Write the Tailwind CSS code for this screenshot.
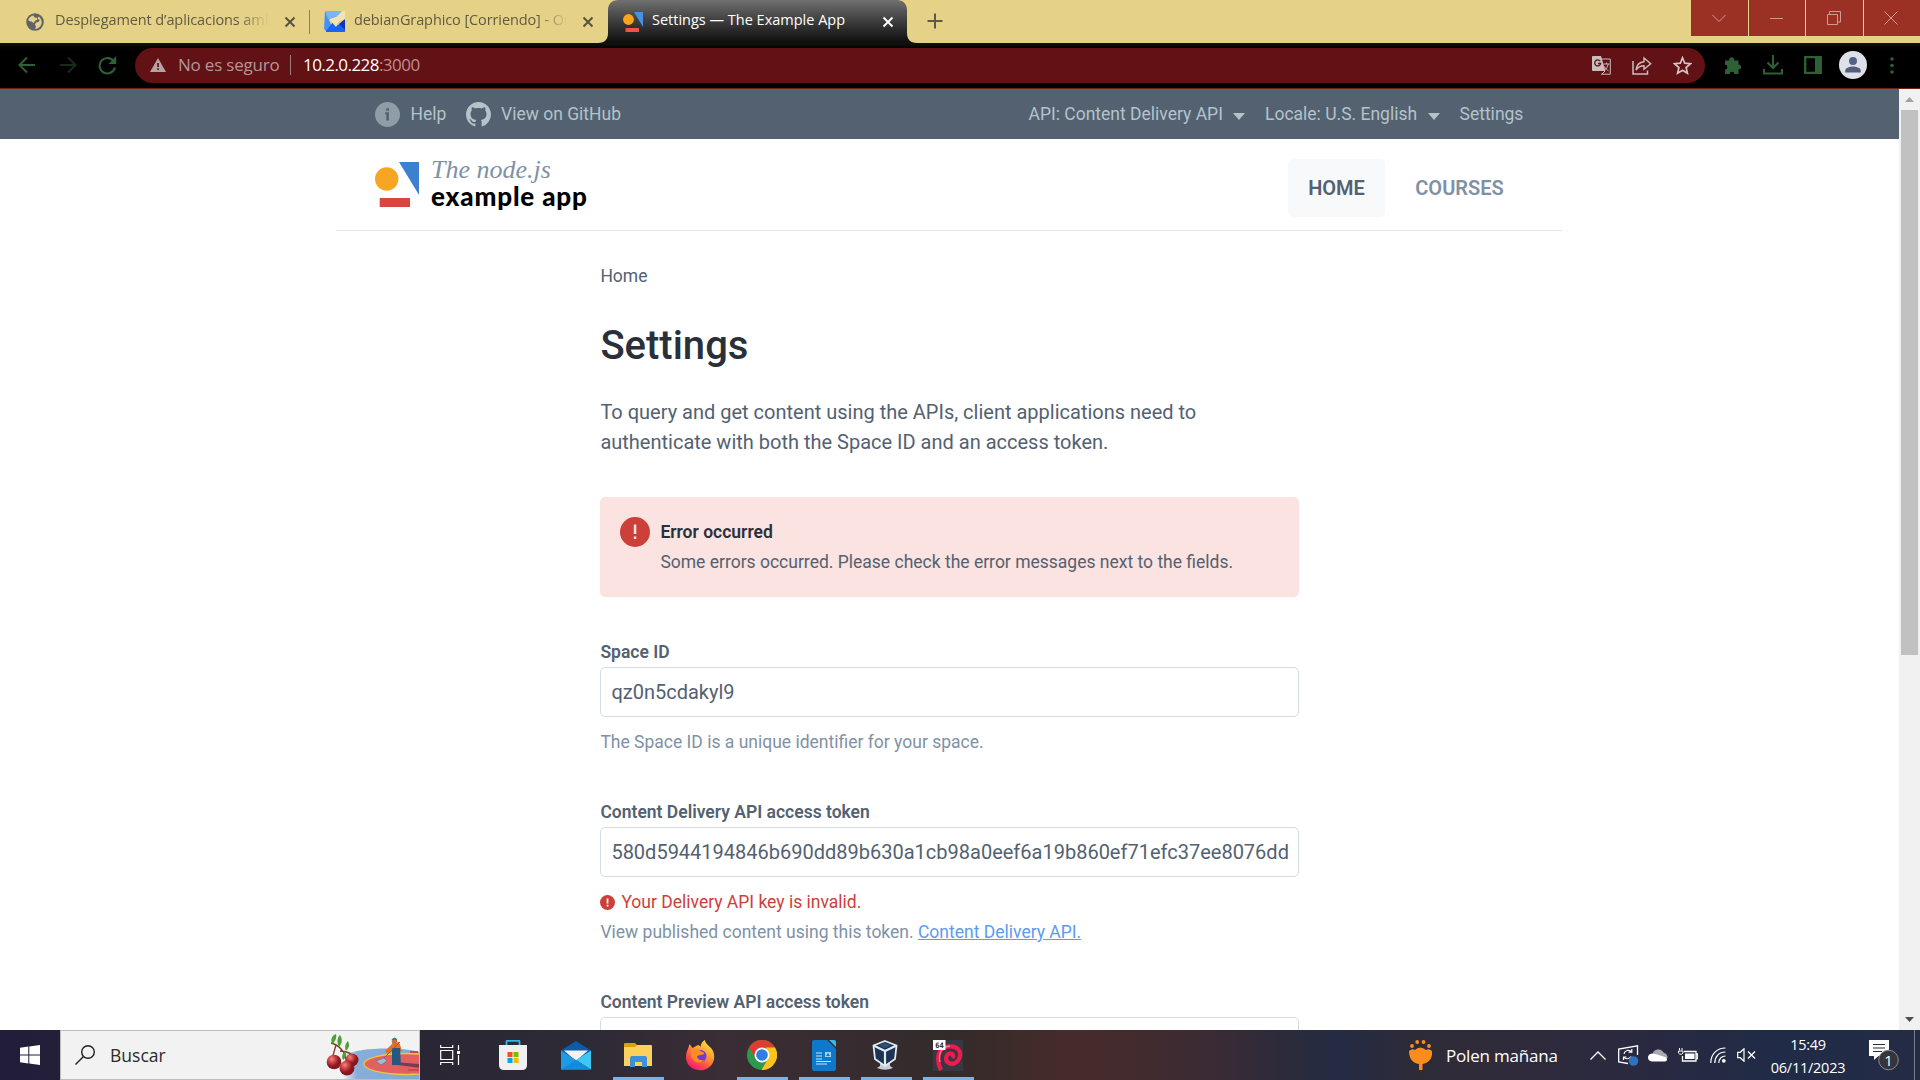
<!DOCTYPE html>
<html lang="es">
<head>
<meta charset="utf-8">
<title>Settings — The Example App</title>
<script src="https://cdn.jsdelivr.net/npm/@tailwindcss/browser@4"></script>
</head>
<body class="w-[1920px] h-[1080px] overflow-hidden flex flex-col bg-white font-['Roboto',sans-serif]">

<!-- Tab strip -->
<header class="h-[43px] shrink-0 bg-[#e6d287] flex items-start font-['Open_Sans',sans-serif] text-[14.5px] text-[#5f5a45]">
  <div class="w-[309px] h-[43px] pl-[26px] flex items-center shrink-0">
    <svg class="w-[18px] h-[18px] shrink-0" viewBox="0 0 18 18"><circle cx="9" cy="9" r="8.8" fill="#5f6368"/><path d="M7.500 2.500c-2.800.3-4.900 2.500-5.300 5.100l3 .9 2.500 1.500 1.300-2.200 2.200-1-.3-2.100-2.400-.3zM12.500 3.500l-1 2.300 2.300 1.200-1.300 2-2.500.6-1.200 2.200 1.300 1.300-1 2.900c4.100-.3 6.500-3.400 6.600-6.700-.1-2.500-1.300-4.500-3.200-5.800z" fill="#e6d287"/></svg>
    <span class="ml-[11px] w-[214px] overflow-hidden whitespace-nowrap tracking-[-0.1px] pb-[3px] [mask-image:linear-gradient(90deg,#000_86%,transparent)]">Desplegament d’aplicacions amb</span>
    <svg class="ml-[15px] w-[12px] h-[12px] shrink-0" viewBox="0 0 12 12"><path d="M1.500 1.500l9 9M10.500 1.500l-9 9" stroke="#55513f" stroke-width="1.900"/></svg>
  </div>
  <div class="w-[299px] h-[43px] flex items-center shrink-0">
    <div class="w-px h-[24px] bg-[#8d8256]"></div>
    <svg class="ml-[14px] w-[21px] h-[21px] shrink-0" viewBox="0 0 21 21"><path d="M1 0h17l-6 6-7 3 5 11H2L0 18z" fill="#4790f8"/><path d="M1 0h17l-5 5-9 3z" fill="#79b5fa"/><path d="M2 20l7-9 3 4 9-5v11H2z" fill="#1b63f5"/><path d="M15 13l6-5v11z" fill="#0a35c0"/><path d="M5 8l8-2.500L18 0h3v8l-6 2-3 6z" fill="#f1e4b0"/></svg>
    <span class="ml-[9px] w-[214px] overflow-hidden whitespace-nowrap tracking-[-0.1px] pb-[3px] [mask-image:linear-gradient(90deg,#000_86%,transparent)]">debianGraphico [Corriendo] - Or</span>
    <svg class="ml-[14px] w-[12px] h-[12px] shrink-0" viewBox="0 0 12 12"><path d="M1.500 1.500l9 9M10.500 1.500l-9 9" stroke="#55513f" stroke-width="1.900"/></svg>
  </div>
  <div class="relative w-[299px] h-[43px] shrink-0 flex items-center text-white">
    <svg class="absolute -left-[10px] top-0 w-[319px] h-[43px]" viewBox="0 0 319 43"><defs><linearGradient id="tab" x2="0" y2="1"><stop offset="0" stop-color="#707070"/><stop offset=".5" stop-color="#3c3c3c"/><stop offset="1" stop-color="#0d0d0d"/></linearGradient></defs><path d="M0 43c7 0 10-4 10-10V10C10 4 14 0 20 0h279c6 0 10 4 10 10v23c0 6 3 10 10 10z" fill="url(#tab)"/></svg>
    <svg class="relative ml-[15px] w-[20px] h-[20px] shrink-0" viewBox="0 0 20 20"><circle cx="5.500" cy="7.500" r="5.400" fill="#fba31b"/><path d="M11 0h9v15z" fill="#4a90e2"/><path d="M2.500 16h13.500v4H2.500z" fill="#f0524c"/></svg>
    <span class="relative ml-[9px] w-[230px] whitespace-nowrap pb-[3px]">Settings — The Example App</span>
    <svg class="relative w-[12px] h-[12px] shrink-0" viewBox="0 0 12 12"><path d="M1.500 1.500l9 9M10.500 1.500l-9 9" stroke="#fff" stroke-width="1.900"/></svg>
  </div>
  <svg class="ml-[20px] mt-[13px] w-[16px] h-[16px]" viewBox="0 0 16 16"><path d="M8 .5v15M.5 8h15" stroke="#5f5a45" stroke-width="2"/></svg>
  <div class="ml-auto flex gap-px h-[36px]">
    <div class="w-[57px] pr-px bg-[#9b3024] flex items-center justify-center"><svg class="w-[14px] h-[14px]" viewBox="0 0 14 14"><path d="M.5 4l6.500 6.500L13.500 4" fill="none" stroke="#cf9a91"/></svg></div>
    <div class="w-[56px] pr-px bg-[#9b3024] flex items-center justify-center"><div class="w-[13px] h-px bg-[#cf9a91]"></div></div>
    <div class="w-[57px] pr-px bg-[#9b3024] flex items-center justify-center"><svg class="w-[14px] h-[14px]" viewBox="0 0 14 14"><path d="M.5 3.500h10v10H.5zM2.500 3.500v-3h11v10.500h-3" fill="none" stroke="#cf9a91"/></svg></div>
    <div class="w-[56px] pr-[2px] bg-[#9b3024] flex items-center justify-center"><svg class="w-[14px] h-[14px]" viewBox="0 0 14 14"><path d="M.5 .5l13 13M13.500 .5l-13 13" stroke="#cf9a91"/></svg></div>
  </div>
</header>

<!-- Address bar -->
<div class="h-[46px] shrink-0 border-b border-[#6e2015] bg-linear-to-b from-[#14140f] to-black to-25% flex items-center pb-px font-['Open_Sans',sans-serif]">
  <svg class="ml-[18px] w-[18px] h-[18px]" viewBox="0 0 18 18"><path d="M17 9H2M9 1.500L1.500 9 9 16.500" fill="none" stroke="#2d6135" stroke-width="2"/></svg>
  <svg class="ml-[23px] w-[18px] h-[18px]" viewBox="0 0 18 18"><path d="M1 9h15M9 1.500L16.500 9 9 16.500" fill="none" stroke="#152c18" stroke-width="2"/></svg>
  <svg class="ml-[21px] w-[19px] h-[19px]" viewBox="0 0 18 18"><path d="M15.200 5.500A7.300 7.300 0 1 0 16 11" fill="none" stroke="#2d6135" stroke-width="2"/><path d="M17.300 0v7.500H10z" fill="#2d6135"/></svg>
  <div class="ml-[18px] w-[1570px] h-[35px] rounded-full bg-[#621114] flex items-center text-[17px] whitespace-nowrap">
    <svg class="ml-[15px] w-[16px] h-[14px]" viewBox="0 0 16 14"><path d="M8 0l8 14H0z" fill="#b6a3a6"/><path d="M7.200 5h1.700v4H7.200zM7.200 10.300h1.700V12H7.200z" fill="#621114"/></svg>
    <span class="ml-[12px] w-[112px] text-[#b1979b] tracking-[-0.2px]">No es seguro</span>
    <div class="w-px h-[20px] bg-[#9c7b7d]"></div>
    <span class="ml-[12px] text-[#c08c8e] tracking-[-0.55px]"><span class="text-white">10.2.0.228</span>:3000</span>
    <div class="ml-auto mr-[13px] flex items-center gap-[21px]">
      <svg class="w-[19px] h-[19px]" viewBox="0 0 19 19"><path d="M8 3h10.300v15.200H9" fill="none" stroke="#c9bdbd"/><path d="M1 0h8l4.500 15H1q-1 0-1-1V1q0-1 1-1z" fill="#c9bdbd"/><path d="M8.200 5.200A3 3 0 1 0 8.700 7.500H6" fill="none" stroke="#621114" stroke-width="1.300"/><path d="M11.500 8h6M14.500 6.500V8M12.500 10.500c1 2 2.500 3.500 4 4.200M16.200 8.200c-.6 2.500-2 4.700-3.600 6M10 18l3-3" fill="none" stroke="#c9bdbd"/></svg>
      <svg class="w-[20px] h-[19px]" viewBox="0 0 20 19"><path d="M1 5v13h14.500v-3.500" fill="none" stroke="#c9bdbd" stroke-width="1.500"/><path d="M4 14c.6-5.500 3.500-8 8-8.300V2l6.700 5.800-6.700 5.500V9.800C8.500 9.800 6 11 4 14z" fill="none" stroke="#c9bdbd" stroke-width="1.400"/></svg>
      <svg class="w-[19px] h-[19px]" viewBox="0 0 19 19"><path d="M9.500 1.800l2.200 5.400 5.700.5-4.300 3.800 1.300 5.700-4.900-3-4.900 3 1.300-5.700L1.600 7.700l5.700-.5z" fill="none" stroke="#d3c5c5" stroke-width="1.700"/></svg>
    </div>
  </div>
  <div class="flex items-center">
    <svg class="ml-[19px] w-[19px] h-[19px]" viewBox="0 0 19 19"><path d="M1 4.500h4.200a2.600 2.600 0 1 1 5 0H14.500V8.500a2.500 2.500 0 1 1 0 5V18h-4.200a2.300 2.300 0 1 0-4.600 0H1v-4.500a2.300 2.300 0 1 0 0-4.700z" fill="#2d6135"/></svg>
    <svg class="ml-[20px] w-[20px] h-[20px]" viewBox="0 0 20 20"><path d="M10 0v12M4.500 7.500L10 13l5.500-5.500M1 14v4.500h18V14" fill="none" stroke="#2d6135" stroke-width="2"/></svg>
    <svg class="ml-[21px] w-[18px] h-[18px]" viewBox="0 0 18 18"><path d="M1.200 1.200h15.600v15.600H1.200z" fill="none" stroke="#2d6135" stroke-width="2.300"/><path d="M11 1h6v16h-6z" fill="#2d6135"/></svg>
    <svg class="ml-[17px] w-[28px] h-[28px]" viewBox="0 0 28 28"><circle cx="14" cy="14" r="14" fill="#dfe1e8"/><circle cx="14" cy="10" r="4" fill="#50618a"/><path d="M6.300 21.500v-2c0-3 5-4 7.700-4s7.700 1 7.700 4v2z" fill="#515f7d"/></svg>
    <svg class="ml-[23px] w-[4px] h-[17px]" viewBox="0 0 4 17"><circle cx="2" cy="2" r="1.800" fill="#2d6135"/><circle cx="2" cy="8.500" r="1.800" fill="#2d6135"/><circle cx="2" cy="15" r="1.800" fill="#2d6135"/></svg>
  </div>
</div>

<!-- Viewport -->
<div class="h-[941px] shrink-0 flex overflow-hidden">
  <div class="w-[1899px] h-full overflow-hidden">
    <div class="h-[50px] bg-[#536171] text-[#b4c3ca] text-[17.5px]">
      <div class="w-[1226px] ml-[336px] h-full flex items-center whitespace-nowrap">
        <svg class="ml-[39px] w-[25px] h-[25px] shrink-0" viewBox="0 0 25 25"><circle cx="12.500" cy="12.500" r="12.500" fill="#8f9da7"/><path d="M11.200 6.300h2.700v2.500h-2.700zM10.300 10.300h3.600v8.200h-2.600v-6.300h-1z" fill="#536171"/></svg>
        <span class="ml-[10.500px] w-[55.500px]">Help</span>
        <svg class="w-[25px] h-[25px] shrink-0" viewBox="0 0 16 16"><path fill="#b4c3ca" d="M8 0C3.580 0 0 3.580 0 8c0 3.540 2.290 6.530 5.470 7.590.4.070.55-.17.55-.38 0-.19-.01-.82-.01-1.490-2.010.37-2.530-.49-2.690-.94-.09-.23-.48-.94-.82-1.130-.28-.15-.68-.52-.01-.53.63-.01 1.080.58 1.230.82.72 1.210 1.870.87 2.330.66.070-.52.28-.87.51-1.070-1.780-.2-3.640-.89-3.640-3.950 0-.87.31-1.590.82-2.150-.08-.2-.36-1.020.08-2.120 0 0 .67-.21 2.200.82.64-.18 1.320-.27 2-.27s1.360.09 2 .27c1.530-1.040 2.200-.82 2.200-.82.44 1.100.16 1.920.08 2.120.51.56.82 1.270.82 2.150 0 3.070-1.870 3.750-3.650 3.950.29.25.54.73.54 1.480 0 1.070-.01 1.930-.01 2.200 0 .21.15.46.55.38A8.010 8.010 0 0 0 16 8c0-4.420-3.580-8-8-8z"/></svg>
        <span class="ml-[10px]">View on GitHub</span>
        <div class="ml-auto flex items-center">
          <span class="w-[204px]">API: Content Delivery API</span>
          <svg class="w-[12px] h-[7px] mt-[4px]" viewBox="0 0 12 7"><path d="M0 0h12L6 7z" fill="#b4c3ca"/></svg>
          <span class="ml-[20.500px] w-[162.500px]">Locale: U.S. English</span>
          <svg class="w-[12px] h-[7px] mt-[4px]" viewBox="0 0 12 7"><path d="M0 0h12L6 7z" fill="#b4c3ca"/></svg>
          <span class="ml-[20px] w-[102.500px]">Settings</span>
        </div>
      </div>
    </div>

    <div class="w-[1226px] ml-[336px] h-[92px] border-b border-[#e5e8ea] flex items-start">
      <svg class="ml-[39px] mt-[22px] w-[45px] h-[47px]" viewBox="0 0 45 47"><circle cx="11.700" cy="18" r="11.700" fill="#f6a623"/><path d="M24 1h20v33z" fill="#3c80cf"/><path d="M4.700 37H35v9H4.700z" fill="#d9453f"/></svg>
      <div class="ml-[11px] mt-[16px] whitespace-nowrap">
        <div class="font-['Liberation_Serif',serif] italic text-[26px] leading-[30px] text-[#8091a5]">The node.js</div>
        <div class="font-['Lato',sans-serif] font-black text-[26px] tracking-[0.85px] leading-[26px] -mt-[2px] text-black">example app</div>
      </div>
      <nav class="ml-auto mt-[20px] mr-[38px] flex text-[20px] font-semibold">
        <a class="w-[97px] h-[58px] rounded-[5px] bg-[#f7f9fb] text-[#536171] flex items-center justify-center">HOME</a>
        <a class="ml-[10px] w-[129px] h-[58px] text-[#8091a5] flex items-center justify-center">COURSES</a>
      </nav>
    </div>

    <main class="w-[699px] ml-[600.400px] pt-[30px] text-[#536171] text-[17.5px] leading-[30px]">
      <div>Home</div>
      <h1 class="mt-[25px] text-[40px] leading-[60px] font-medium text-[#2a3039]">Settings</h1>
      <p class="mt-[21px] text-[20px] whitespace-nowrap">To query and get content using the APIs, client applications need to<br>authenticate with both the Space ID and an access token.</p>
      <div class="mt-[40px] h-[100px] rounded-[5px] bg-[#fae3e1] pt-[20px] pl-[20px] flex items-start">
        <svg class="w-[30px] h-[30px]" viewBox="0 0 30 30"><circle cx="15" cy="15" r="15" fill="#cd3f39"/><path d="M13.800 7.500h2.500v9.500h-2.500zM13.800 19.500h2.500V22h-2.500z" fill="#fae3e1"/></svg>
        <div class="ml-[10px] whitespace-nowrap"><div class="font-semibold text-[#2a3039]">Error occurred</div><div>Some errors occurred. Please check the error messages next to the fields.</div></div>
      </div>
      <label class="block mt-[40px] font-semibold">Space ID</label>
      <div class="h-[50px] rounded-[5px] border border-[#d3dce0] px-[10px] flex items-center text-[20px]">qz0n5cdakyl9</div>
      <div class="mt-[10px] text-[#8091a5]">The Space ID is a unique identifier for your space.</div>
      <label class="block mt-[40px] font-semibold">Content Delivery API access token</label>
      <div class="h-[50px] rounded-[5px] border border-[#d3dce0] px-[10px] flex items-center text-[20px] whitespace-nowrap overflow-hidden">580d5944194846b690dd89b630a1cb98a0eef6a19b860ef71efc37ee8076dd</div>
      <div class="mt-[10px] flex items-center text-[#cd3f39]"><svg class="mr-[6px] w-[15px] h-[15px]" viewBox="0 0 30 30"><circle cx="15" cy="15" r="15" fill="#cd3f39"/><path d="M13.300 7h3.500v10h-3.500zM13.300 19.500h3.500V23h-3.500z" fill="#fff"/></svg>Your Delivery API key is invalid.</div>
      <div class="text-[#8091a5]">View published content using this token. <a class="underline text-[#5b9bf0]">Content Delivery API.</a></div>
      <label class="block mt-[40px] font-semibold">Content Preview API access token</label>
      <div class="h-[50px] rounded-[5px] border border-[#d3dce0]"></div>
    </main>
  </div>
  <div class="w-[21px] h-full bg-[#f1f1f1] flex flex-col items-center">
    <div class="h-[21px] flex items-center"><svg class="w-[9px] h-[5px]" viewBox="0 0 9 5"><path d="M0 5h9L4.500 0z" fill="#a3a3a3"/></svg></div>
    <div class="w-[17px] h-[545px] bg-[#c1c1c1]"></div>
    <div class="mt-auto h-[21px] flex items-center"><svg class="w-[9px] h-[5px]" viewBox="0 0 9 5"><path d="M0 0h9L4.500 5z" fill="#505050"/></svg></div>
  </div>
</div>

<!-- Taskbar -->
<footer class="h-[50px] shrink-0 flex bg-[linear-gradient(90deg,#211d3a_0,#241f38_60px,#2b2633_430px,#2e2a36_600px,#3a2d35_720px,#372c30_850px,#332b2a_950px,#462b2b_1065px,#422b2e_1140px,#392b35_1220px,#2b2b3c_1290px,#242b42_1340px,#2e2b38_1420px,#302b3a_1500px,#292940_1640px,#202b47_1780px,#242b45_1920px)] font-['Open_Sans',sans-serif] text-white">
  <div class="w-[60px] flex items-center justify-center"><svg class="w-[20px] h-[20px]" viewBox="0 0 20 20"><path d="M0 2.800l8.300-1.200v8H0zM9.300 1.400L20 0v9.500H9.300zM0 10.500h8.300v8L0 17.300zM9.300 10.500H20V20L9.300 18.600z" fill="#fff"/></svg></div>
  <div class="w-[360px] bg-[#f2f2f2] border border-[#bcbcbc] flex items-center text-[#2b2b2b] text-[17.5px] overflow-hidden">
    <svg class="ml-[14px] w-[20px] h-[20px]" viewBox="0 0 20 20"><circle cx="13" cy="7" r="6.300" fill="none" stroke="#222" stroke-width="1.400"/><path d="M8.500 11.500L.5 19.500" stroke="#222" stroke-width="1.400"/></svg>
    <span class="ml-[15px]">Buscar</span>
    <svg class="ml-auto w-[93px] h-[48px]" viewBox="0 0 93 48"><defs><linearGradient id="w"><stop offset="0" stop-color="#86aedb" stop-opacity="0"/><stop offset=".18" stop-color="#86aedb"/><stop offset="1" stop-color="#7fa9d2"/></linearGradient><radialGradient id="b" cx=".35" cy=".3"><stop offset="0" stop-color="#f08a80"/><stop offset=".5" stop-color="#cf4044"/><stop offset="1" stop-color="#85191f"/></radialGradient></defs>
      <path d="M17 48V24c20-8 55-8 77-3v27z" fill="url(#w)"/><ellipse cx="80" cy="33" rx="42" ry="10.500" fill="#e2605f" stroke="#efc63f" stroke-width="1.300"/><path d="M68 31l26 2v4l-22-3z" fill="#7a3a50"/><path d="M84 21h8M82 39h12" stroke="#cd4a4c" stroke-width="2"/>
      <path d="M5 12c8 2 14 8 16 20M10 14l-4 14M14 20c6 0 12 3 15 7" fill="none" stroke="#7c3b25" stroke-width="1.300"/><path d="M6 13c-2-6 1-9 4-10 1 4-1 8-4 10zM13 16c-3-6-1-10 1-12 3 4 2 9-1 12zM20 20c-2-5 0-8 2-10 2 4 1 7-2 10zM17 29c-2-4 0-7 2-9 2 3 1 7-2 9z" fill="#4f9f35"/>
      <circle cx="26" cy="29" r="6.500" fill="url(#b)"/><circle cx="8" cy="31" r="7.300" fill="url(#b)"/><circle cx="21" cy="37" r="7.500" fill="url(#b)"/>
      <path d="M66 13l-7 7 3 3 6-4z" fill="#e66d23"/><path d="M66 12l7-1 3 9-9 2z" fill="#e66d23"/><path d="M66 17h8l1 17h-9z" fill="#27577d"/><circle cx="68.500" cy="10" r="2.700" fill="#b87251"/><path d="M65.500 9q3-5 6 0z" fill="#2b8a71"/><path d="M74 11l-17 17" stroke="#606a80"/><path d="M50 30l8-3 3 3-6 4z" fill="#a8b9cd" stroke="#66768d" stroke-width=".7"/></svg>
  </div>
  <div class="w-[60px] flex items-center justify-center"><svg class="w-[20px] h-[20px]" viewBox="0 0 20 20"><path d="M.7 0v2.500h12V0M.7 5.500h12v9H.7zM.7 20v-2.500h12V20M18.500 0v5M18.500 10v10" fill="none" stroke="#fff" stroke-width="1.200"/><path d="M17 6h3v3h-3z" fill="#fff"/></svg></div>
  <div class="w-[65px] pl-px flex items-center justify-center"><svg class="w-[30px] h-[30px]" viewBox="0 0 30 30"><path d="M8.500 7V1.500q0-.7.8-.7h11.400q.8 0 .8.700V7" fill="none" stroke="#35b4e8" stroke-width="1.800"/><path d="M1 5h28v20q0 5-5 5H6q-5 0-5-5z" fill="#f0f0f0"/><path d="M9.500 12h5v5h-5z" fill="#f25022"/><path d="M15.500 12h5v5h-5z" fill="#7fba00"/><path d="M9.500 18h5v5h-5z" fill="#00a4ef"/><path d="M15.500 18h5v5h-5z" fill="#ffb900"/></svg></div>
  <div class="w-[62px] flex items-center justify-center"><svg class="w-[30px] h-[29px]" viewBox="0 0 30 29"><path d="M0 9.500L15 0l15 9.500V17H0z" fill="#0b5cab"/><path d="M3 9.500h24L15 20z" fill="#f3f3f3"/><path d="M0 9.500L30 28.500H0z" fill="#1f9be6"/><path d="M30 9.500v19L15 19z" fill="#3fc6f4"/><path d="M0 28.500h30L15 19z" fill="#1689d8"/></svg></div>
  <div class="relative w-[62px] flex items-center justify-center"><svg class="w-[28px] h-[24px]" viewBox="0 0 28 24"><path d="M0 1q0-1 1-1h10l3 3v4H0z" fill="#dd9f0a"/><path d="M0 4h11l2-2h14q1 0 1 1v20H0z" fill="#fbd05c"/><path d="M6 24V15q0-2 2-2h13q2 0 2 2v9h-5v-5h-7v5z" fill="#3d8fd7"/></svg><div class="absolute bottom-0 left-[6px] w-[51px] h-[3px] bg-[#76b4ee]"></div></div>
  <div class="w-[62px] flex items-center justify-center"><svg class="w-[30px] h-[31px]" viewBox="0 0 30 31"><defs><linearGradient id="ff" x1=".8" y1="0" x2=".2" y2="1"><stop offset="0" stop-color="#ffe847"/><stop offset=".4" stop-color="#ff9b2b"/><stop offset=".75" stop-color="#ff4150"/><stop offset="1" stop-color="#e31587"/></linearGradient></defs><path d="M3 9l1.500-5 3 4L13 5c1 0 2 1 2.500 2 .3-3 1.500-5.500 4.500-7 0 4 5 6 7.500 10C31 17 29 24 23 28c-5 3.500-13 3-18-1.500S0 14 3 9z" fill="url(#ff)"/><circle cx="15.500" cy="16" r="6" fill="#7838d8"/><path d="M8 9c3-1 6 0 7 2 2 1 4 1 4 2.500S15 14.500 12 16c0 3 3 5 7 4-3 4-10 3-12-2s-1-7 1-9z" fill="#ff8e27"/></svg></div>
  <div class="relative w-[62px] flex items-center justify-center"><svg class="w-[30px] h-[30px]" viewBox="0 0 30 30"><circle cx="15" cy="15" r="15" fill="#2d9a4b"/><path d="M2 7.500A15 15 0 0 1 28 7.500L15 8 9 19z" fill="#dd3d31"/><path d="M28 7.500A15 15 0 0 1 14.500 30L21.500 18 19 7.500z" fill="#fcc31e"/><circle cx="15" cy="15" r="7.500" fill="#fff"/><circle cx="15" cy="15" r="5.800" fill="#2f7de9"/></svg><div class="absolute bottom-0 left-[6px] w-[51px] h-[3px] bg-[#76b4ee]"></div></div>
  <div class="relative w-[62px] flex items-center justify-center"><svg class="w-[24px] h-[31px]" viewBox="0 0 24 31"><path d="M2 0h13l9 9v20q0 2-2 2H2q-2 0-2-2V2q0-2 2-2z" fill="#0f78ca"/><path d="M17 0h5q2 0 2 2v5z" fill="#37b8ee"/><path d="M4 13h6M4 16h6M4 19h6M4 21.500h15M4 24h11" stroke="#c9e6f8" stroke-width="1.200"/><path d="M13 12h6v5h-6z" fill="#9ed5f5"/><path d="M14 16l2-3 2 3z" fill="#0f78ca"/></svg><div class="absolute bottom-0 left-[6px] w-[51px] h-[3px] bg-[#76b4ee]"></div></div>
  <div class="relative w-[62px] pr-[2px] flex items-center justify-center"><svg class="w-[26px] h-[30px]" viewBox="0 0 26 30"><path d="M8 22h10v4l3 2q-8 3.500-16 0l3-2z" fill="#c7ced9"/><path d="M13 1l11.500 4.500L23 19l-10 7L3 19 1.500 5.500z" fill="#1d3354" stroke="#e3e9f1" stroke-width="1.800"/><path d="M1.500 5.500L13 11l11.500-5.500M13 11v15" fill="none" stroke="#e3e9f1" stroke-width="2.200"/><path d="M7 5.500L13 3l6 2.500L13 8z" fill="#2f527c"/></svg><div class="absolute bottom-0 left-[6px] w-[51px] h-[3px] bg-[#76b4ee]"></div></div>
  <div class="relative w-[62px] flex items-center justify-center"><svg class="w-[30px] h-[31px]" viewBox="0 0 30 31"><path d="M0 0h30v31H0z" fill="#363942"/><path d="M8 30C3 20 4 6 17 6.300c7 0 11 4 10 9.700s-6 9.500-11 7-3-9.500 1.500-9.500c2.500 0 3.500 2.500 2 4.500" fill="none" stroke="#ef1b4c" stroke-width="4.200"/><path d="M7 22C5 13 9 6.500 17 6" fill="none" stroke="#ff7a96" stroke-width="1.300"/><path d="M0 0h12.500v10H0z" fill="#fff"/><text x="2.200" y="8" font-family="DejaVu Sans" font-size="7.500" font-weight="bold" textLength="8.500" lengthAdjust="spacingAndGlyphs" fill="#333">64</text></svg><div class="absolute bottom-0 left-[6px] w-[51px] h-[3px] bg-[#76b4ee]"></div></div>

  <div class="ml-auto flex items-center whitespace-nowrap">
    <svg class="w-[23px] h-[30px]" viewBox="0 0 23 30"><path d="M0 11q3-3 6-1 5-5 11 0 3-2 6 1c1 7-3 12-9.500 13V30h-3.500v-6C3 23 0 18 0 11z" fill="#fb8c1e"/><g fill="#fb8c1e"><circle cx="3" cy="6" r="1.900"/><circle cx="8.200" cy="2" r="1.900"/><circle cx="14.500" cy="2" r="1.900"/><circle cx="20" cy="6" r="1.900"/></g></svg>
    <span class="ml-[14px] w-[144px] text-[17px] tracking-[-0.2px] pt-px">Polen mañana</span>
    <svg class="w-[16px] h-[9px]" viewBox="0 0 16 9"><path d="M.5 8.500L8 1l7.500 7.500" fill="none" stroke="#fff" stroke-width="1.300"/></svg>
    <svg class="ml-[12px] w-[21px] h-[21px]" viewBox="0 0 21 21"><path d="M10 18.500L.7 17V4L19.500.8V10" fill="none" stroke="#fff" stroke-width="1.300"/><path d="M6 9a4.300 4.300 0 0 1 7.500-2.200M13.800 4v3.200h-3.200M13 11.500a4.300 4.300 0 0 1-7 .8M5.500 15v-3h3" fill="none" stroke="#fff" stroke-width="1.200"/><circle cx="15.500" cy="16" r="4.800" fill="#2f72bd"/></svg>
    <svg class="ml-[9px] w-[20px] h-[14px]" viewBox="0 0 20 14"><path d="M4.500 6A6 6 0 0 1 15.500 4.500Q20 6 19.500 10L12 9z" fill="#a9a9b2"/><path d="M4 13.500Q0 13 0 9.500 0 6 4 5.500l5 1 9.500 3q1.500 3.500-1.500 4z" fill="#fff"/></svg>
    <svg class="ml-[10px] w-[20px] h-[15px]" viewBox="0 0 20 15"><path d="M6 3.500h12v9.500H4.500V8M18.500 6h1v4.500h-1" fill="none" stroke="#fff" stroke-width="1.300"/><path d="M7 5.500h9.500V11H7z" fill="#fff"/><path d="M1.500 0v2.500M4 0v2.500M.5 3h4.500v2l-1.200 1.200h-2L.5 5z" fill="none" stroke="#fff" stroke-width="1"/></svg>
    <svg class="ml-[12px] w-[16px] h-[16px]" viewBox="0 0 16 16"><g fill="none" stroke="#fff" stroke-width="1.200"><path d="M.8 16C.8 7 7 1 15.500 1"/><path d="M4.800 16C4.800 9.500 9 5 15.500 5"/><path d="M8.800 16C8.800 12 11.500 9 15.500 9"/></g><circle cx="13.800" cy="13.800" r="1.900" fill="#fff"/></svg>
    <svg class="ml-[11px] w-[19px] h-[14px]" viewBox="0 0 19 14"><path d="M.7 4.300h2.500L7 .8v12.400L3.200 9.700H.7z" fill="none" stroke="#fff" stroke-width="1.200"/><path d="M11 3.500l7 7M18 3.500l-7 7" stroke="#fff" stroke-width="1.300"/></svg>
    <div class="ml-[10px] mt-px w-[84px] text-center text-[14.5px] leading-[23px] tracking-[-0.25px]"><div>15:49</div><div>06/11/2023</div></div>
    <div class="relative ml-[19px] w-[45px] h-[32px]"><svg class="w-[32px] h-[32px]" viewBox="0 0 32 32"><path d="M0 1h20v16H9.500L5 21v-4H0z" fill="#fff"/><path d="M4 5.500h12M4 9h12M4 12.500h9" stroke="#292b40" stroke-width="1.200"/><circle cx="19.500" cy="21" r="9.800" fill="#34363c" stroke="#8b8c90"/></svg><span class="absolute left-[15px] top-[11px] w-[9px] text-center text-[15px] leading-[20px]">1</span></div>
    <div class="w-px h-[50px] bg-[#777b8b] mr-[5px]"></div>
  </div>
</footer>
</body>
</html>
